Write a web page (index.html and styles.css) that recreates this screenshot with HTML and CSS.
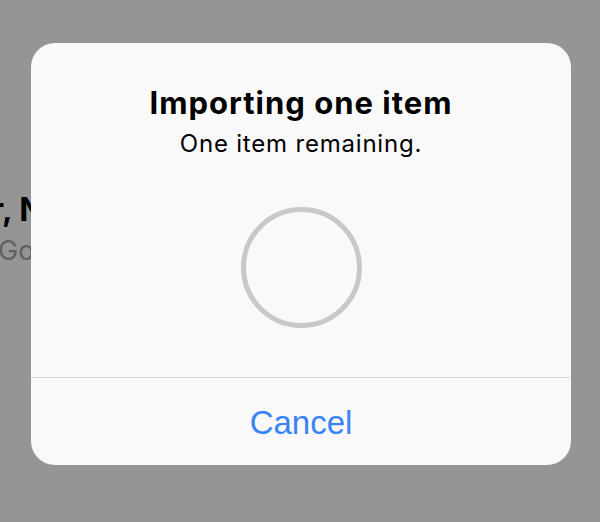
FILE: index.html
```html
<!DOCTYPE html>
<html>
<head>
<meta charset="utf-8">
<link rel="stylesheet" href="styles.css">
</head>
<body>
<div class="screen">
  <div class="behind">
    <div class="behind-title">r, Nora Baker</div>
    <div class="behind-sub">Gočar Street</div>
  </div>
  <div class="dialog">
    <div class="dialog-body">
      <div class="title">Importing one item</div>
      <div class="subtitle">One item remaining.</div>
      <div class="spinner"></div>
    </div>
    <div class="actions">
      <div class="cancel">Cancel</div>
    </div>
  </div>
</div>
</body>
</html>
```
FILE: styles.css
```css
html, body {
  margin: 0;
  padding: 0;
}
body {
  width: 600px;
  height: 522px;
  overflow: hidden;
  background: #959595;
  font-family: Inter, "Liberation Sans", sans-serif;
}
.screen {
  position: relative;
  width: 600px;
  height: 522px;
}
.behind {
  padding-top: 190px;
}
.behind-title {
  margin-left: -9px;
  font-size: 32px;
  font-weight: 700;
  color: #000;
  line-height: 40px;
  white-space: nowrap;
}
.behind-sub {
  margin-top: 5px;
  margin-left: -2px;
  font-size: 27px;
  color: #616161;
  line-height: 32px;
  white-space: nowrap;
}
.dialog {
  position: absolute;
  left: 31px;
  top: 43px;
  width: 540px;
  height: 422px;
  background: #f9f9f9;
  border-radius: 24px;
  display: flex;
  flex-direction: column;
  overflow: hidden;
}
.dialog-body {
  height: 334px;
  border-bottom: 1px solid #d9d9d9;
  display: flex;
  flex-direction: column;
  align-items: center;
}
.title {
  margin-top: 42px;
  font-size: 31px;
  font-weight: 700;
  letter-spacing: 1px;
  color: #000;
  line-height: 36px;
}
.subtitle {
  margin-top: 8px;
  font-size: 24px;
  letter-spacing: 0.8px;
  color: #000;
  line-height: 30px;
}
.spinner {
  margin-top: 48px;
  width: 111px;
  height: 111px;
  border: 5px solid #c8c8c8;
  border-radius: 50%;
}
.actions {
  flex: 1;
  display: flex;
  align-items: center;
  justify-content: center;
}
.cancel {
  font-family: "Liberation Sans", Arial, sans-serif;
  font-size: 33px;
  color: #3a82f7;
  line-height: 40px;
  margin-top: 2px;
}
```
